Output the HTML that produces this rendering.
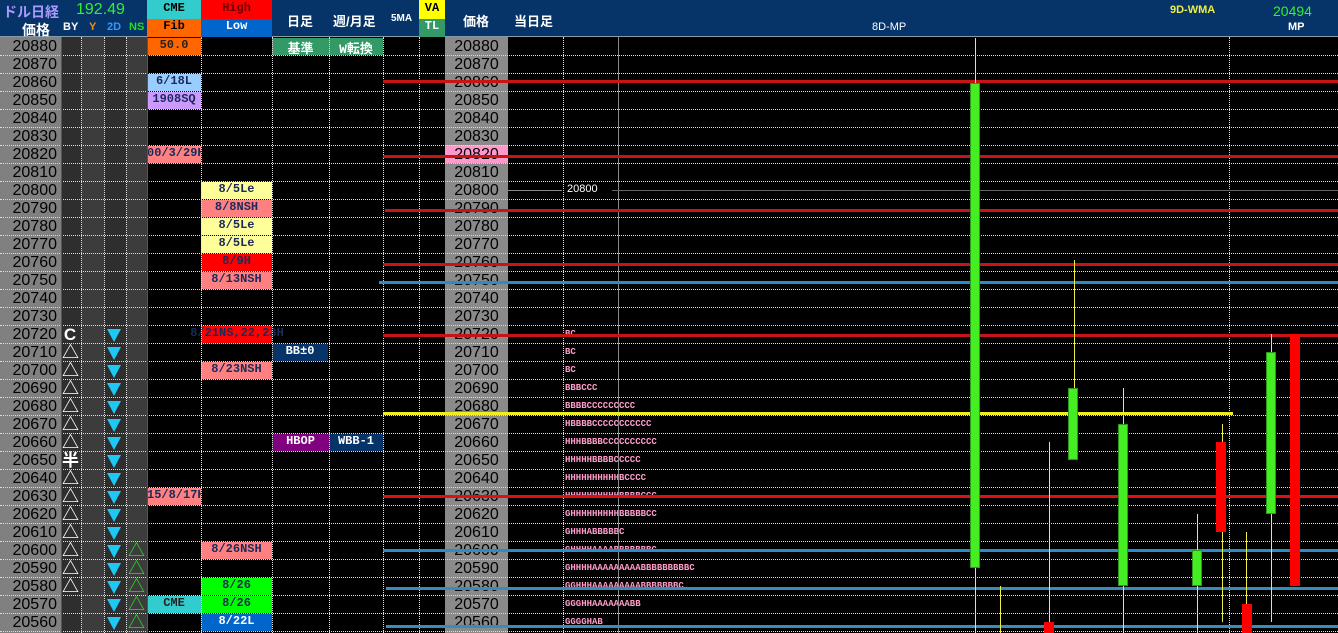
<!DOCTYPE html>
<html><head><meta charset="utf-8"><style>
*{margin:0;padding:0;box-sizing:border-box}
body{width:1338px;height:633px;background:#000;position:relative;overflow:hidden;font-family:"Liberation Sans","Noto Sans CJK JP",sans-serif}
div{position:absolute}
.hd{top:0;left:0;width:1338px;height:37px;background:#063468;border-bottom:1px solid #8899aa}
.ht{font-weight:bold;font-size:13px;color:#fff;white-space:nowrap}
.col{top:37px;height:596px}
.h{left:0;width:1338px;height:0;border-top:1px dotted #ddd}
.v{top:37px;height:596px;width:0;border-left:1px dotted #ddd}
.p{left:0;width:61px;height:18px;text-align:right;padding-right:4px;font-size:16px;line-height:19px;color:#000}
.p2{left:445px;width:63px;height:18px;text-align:center;font-size:16px;line-height:19px;color:#000}
.l{height:17px;line-height:17px;text-align:center;font:bold 12px "Liberation Mono","Noto Sans CJK JP",monospace;color:#1a2a5a;white-space:nowrap;overflow:hidden}
.w{color:#fff}
.tri{left:62px;width:16px;height:18px;color:#fff;font-size:17px;font-weight:bold;line-height:19px;text-align:center}
.dn{left:107px;width:0;height:0;border-left:7px solid transparent;border-right:7px solid transparent;border-top:13px solid #1ec8f5}
.ns{left:128px;color:#2d2;font-size:17px;font-weight:bold;line-height:19px;width:16px;text-align:center;height:18px}
.t{left:565px;font:bold 9px "Liberation Mono",monospace;color:#ff9ccc;height:18px;line-height:18px;white-space:nowrap}
.hl{height:3px}
.c{width:10px}
.wk{width:1px;background:#ee4}
</style></head><body>
<div class="hd"></div>
<div class="ht" style="left:3px;top:2px;color:#aa99ff;font-size:14px">ドル日経</div>
<div class="ht" style="left:22px;top:20px;font-size:14px">価格</div>
<div class="ht" style="left:76px;top:1px;color:#33ee33;font-size:16px;font-weight:normal">192.49</div>
<div class="ht" style="left:63px;top:21px;font-size:11px">BY</div>
<div class="ht" style="left:89px;top:21px;font-size:11px;color:#f80">Y</div>
<div class="ht" style="left:107px;top:21px;font-size:11px;color:#39f">2D</div>
<div class="ht" style="left:129px;top:21px;font-size:11px;color:#2d2">NS</div>
<div style="left:147px;top:0;width:54px;height:19px;background:#33cccc"></div>
<div style="left:147px;top:19px;width:54px;height:18px;background:#ff6600"></div>
<div class="l" style="left:147px;top:1px;width:54px;color:#000">CME</div>
<div class="l" style="left:147px;top:19px;width:54px;color:#000">Fib</div>
<div style="left:201px;top:0;width:71px;height:19px;background:#ff0000"></div>
<div style="left:201px;top:19px;width:71px;height:18px;background:#0066cc"></div>
<div class="l" style="left:201px;top:1px;width:71px;color:#600">High</div>
<div class="l w" style="left:201px;top:19px;width:71px">Low</div>
<div class="ht" style="left:287px;top:11px">日足</div>
<div class="ht" style="left:333px;top:11px">週/月足</div>
<div class="ht" style="left:391px;top:13px;font-size:10px">5MA</div>
<div style="left:419px;top:0;width:26px;height:19px;background:#ffff00"></div>
<div style="left:419px;top:19px;width:26px;height:18px;background:#339966"></div>
<div class="l" style="left:419px;top:1px;width:26px;color:#000">VA</div>
<div class="l w" style="left:419px;top:19px;width:26px">TL</div>
<div class="ht" style="left:463px;top:11px">価格</div>
<div class="ht" style="left:514px;top:11px">当日足</div>
<div class="ht" style="left:872px;top:21px;font-size:11px;font-weight:normal">8D-MP</div>
<div class="ht" style="left:1170px;top:4px;font-size:11px;color:#ee4">9D-WMA</div>
<div class="ht" style="left:1273px;top:3px;font-size:14px;color:#3e3;font-weight:normal">20494</div>
<div class="ht" style="left:1288px;top:21px;font-size:11px">MP</div>

<div class="col" style="left:0;width:61px;background:#808080"></div>
<div class="col" style="left:61px;width:20px;background:#2e2e2e"></div>
<div class="col" style="left:81px;width:23px;background:#3c3c3c"></div>
<div class="col" style="left:104px;width:22px;background:#2e2e2e"></div>
<div class="col" style="left:126px;width:21px;background:#3c3c3c"></div>
<div class="col" style="left:445px;width:63px;background:#8a8a8a"></div>
<div style="left:445px;top:145px;width:63px;height:18px;background:#ff99cc"></div>

<div class="l" style="left:147px;top:38px;width:54px;background:#ff6600;color:#222">50.0</div>
<div class="l w" style="left:272px;top:38px;width:57px;background:#339966;font-size:13px">基準</div>
<div class="l w" style="left:329px;top:38px;width:54px;background:#339966;font-size:13px">W転換</div>
<div class="l" style="left:147px;top:74px;width:54px;background:#99ccff">6/18L</div>
<div class="l" style="left:147px;top:92px;width:54px;background:#cc99ff">1908SQ</div>
<div class="l" style="left:147px;top:146px;width:54px;background:#ff8080;text-align:right">00/3/29H</div>
<div class="l" style="left:201px;top:182px;width:71px;background:#ffff99">8/5Le</div>
<div class="l" style="left:201px;top:200px;width:71px;background:#ff8080">8/8NSH</div>
<div class="l" style="left:201px;top:236px;width:71px;background:#ffff99">8/5Le</div>
<div class="l" style="left:201px;top:218px;width:71px;background:#ffff99">8/5Le</div>
<div class="l" style="left:201px;top:254px;width:71px;background:#ff0000">8/9H</div>
<div class="l" style="left:201px;top:272px;width:71px;background:#ff8080">8/13NSH</div>
<div style="left:201px;top:326px;width:71px;height:17px;background:#ff0000"></div>
<div class="l" style="left:190px;top:326px;width:94px;overflow:visible">8/21NS,22,23H</div>
<div class="l w" style="left:272px;top:344px;width:56px;background:#063468">BB±0</div>
<div class="l" style="left:201px;top:362px;width:71px;background:#ff8080">8/23NSH</div>
<div class="l w" style="left:272px;top:434px;width:57px;background:#800080">HBOP</div>
<div class="l w" style="left:329px;top:434px;width:54px;background:#063468">WBB-1</div>
<div class="l" style="left:147px;top:488px;width:54px;background:#ff8080;text-align:right">15/8/17H</div>
<div class="l" style="left:201px;top:542px;width:71px;background:#ff8080">8/26NSH</div>
<div class="l" style="left:201px;top:578px;width:71px;background:#00ff00">8/26</div>
<div class="l" style="left:201px;top:596px;width:71px;background:#00ff00">8/26</div>
<div class="l" style="left:147px;top:596px;width:54px;background:#33cccc;color:#222">CME</div>
<div class="l w" style="left:201px;top:614px;width:71px;background:#0066cc">8/22L</div>

<div class="p" style="top:37px">20880</div><div class="p" style="top:55px">20870</div><div class="p" style="top:73px">20860</div><div class="p" style="top:91px">20850</div><div class="p" style="top:109px">20840</div><div class="p" style="top:127px">20830</div><div class="p" style="top:145px">20820</div><div class="p" style="top:163px">20810</div><div class="p" style="top:181px">20800</div><div class="p" style="top:199px">20790</div><div class="p" style="top:217px">20780</div><div class="p" style="top:235px">20770</div><div class="p" style="top:253px">20760</div><div class="p" style="top:271px">20750</div><div class="p" style="top:289px">20740</div><div class="p" style="top:307px">20730</div><div class="p" style="top:325px">20720</div><div class="p" style="top:343px">20710</div><div class="p" style="top:361px">20700</div><div class="p" style="top:379px">20690</div><div class="p" style="top:397px">20680</div><div class="p" style="top:415px">20670</div><div class="p" style="top:433px">20660</div><div class="p" style="top:451px">20650</div><div class="p" style="top:469px">20640</div><div class="p" style="top:487px">20630</div><div class="p" style="top:505px">20620</div><div class="p" style="top:523px">20610</div><div class="p" style="top:541px">20600</div><div class="p" style="top:559px">20590</div><div class="p" style="top:577px">20580</div><div class="p" style="top:595px">20570</div><div class="p" style="top:613px">20560</div>
<div class="p2" style="top:37px">20880</div><div class="p2" style="top:55px">20870</div><div class="p2" style="top:73px">20860</div><div class="p2" style="top:91px">20850</div><div class="p2" style="top:109px">20840</div><div class="p2" style="top:127px">20830</div><div class="p2" style="top:145px">20820</div><div class="p2" style="top:163px">20810</div><div class="p2" style="top:181px">20800</div><div class="p2" style="top:199px">20790</div><div class="p2" style="top:217px">20780</div><div class="p2" style="top:235px">20770</div><div class="p2" style="top:253px">20760</div><div class="p2" style="top:271px">20750</div><div class="p2" style="top:289px">20740</div><div class="p2" style="top:307px">20730</div><div class="p2" style="top:325px">20720</div><div class="p2" style="top:343px">20710</div><div class="p2" style="top:361px">20700</div><div class="p2" style="top:379px">20690</div><div class="p2" style="top:397px">20680</div><div class="p2" style="top:415px">20670</div><div class="p2" style="top:433px">20660</div><div class="p2" style="top:451px">20650</div><div class="p2" style="top:469px">20640</div><div class="p2" style="top:487px">20630</div><div class="p2" style="top:505px">20620</div><div class="p2" style="top:523px">20610</div><div class="p2" style="top:541px">20600</div><div class="p2" style="top:559px">20590</div><div class="p2" style="top:577px">20580</div><div class="p2" style="top:595px">20570</div><div class="p2" style="top:613px">20560</div>

<div class="tri" style="top:325px">C</div>
<div class="tri" style="top:343px">△</div><div class="tri" style="top:361px">△</div><div class="tri" style="top:379px">△</div><div class="tri" style="top:397px">△</div><div class="tri" style="top:415px">△</div><div class="tri" style="top:433px">△</div>
<div class="tri" style="top:451px">半</div>
<div class="tri" style="top:469px">△</div><div class="tri" style="top:487px">△</div><div class="tri" style="top:505px">△</div><div class="tri" style="top:523px">△</div><div class="tri" style="top:541px">△</div><div class="tri" style="top:559px">△</div><div class="tri" style="top:577px">△</div>
<div class="dn" style="top:329px"></div><div class="dn" style="top:347px"></div><div class="dn" style="top:365px"></div><div class="dn" style="top:383px"></div><div class="dn" style="top:401px"></div><div class="dn" style="top:419px"></div><div class="dn" style="top:437px"></div><div class="dn" style="top:455px"></div><div class="dn" style="top:473px"></div><div class="dn" style="top:491px"></div><div class="dn" style="top:509px"></div><div class="dn" style="top:527px"></div><div class="dn" style="top:545px"></div><div class="dn" style="top:563px"></div><div class="dn" style="top:581px"></div><div class="dn" style="top:599px"></div><div class="dn" style="top:617px"></div>
<div class="ns" style="top:541px">△</div><div class="ns" style="top:559px">△</div><div class="ns" style="top:577px">△</div><div class="ns" style="top:595px">△</div><div class="ns" style="top:613px">△</div>

<div class="t" style="top:325px">BC</div>
<div class="t" style="top:343px">BC</div>
<div class="t" style="top:361px">BC</div>
<div class="t" style="top:379px">BBBCCC</div>
<div class="t" style="top:397px">BBBBCCCCCCCCC</div>
<div class="t" style="top:415px">HBBBBCCCCCCCCCCC</div>
<div class="t" style="top:433px">HHHBBBBCCCCCCCCCC</div>
<div class="t" style="top:451px">HHHHHBBBBCCCCC</div>
<div class="t" style="top:469px">HHHHHHHHHHBCCCC</div>
<div class="t" style="top:487px">HHHHHHHHHHBBBBCCC</div>
<div class="t" style="top:505px">GHHHHHHHHHBBBBBCC</div>
<div class="t" style="top:523px">GHHHABBBBBC</div>
<div class="t" style="top:541px">GHHHHAAAABBBBBBBC</div>
<div class="t" style="top:559px">GHHHHAAAAAAAAABBBBBBBBBC</div>
<div class="t" style="top:577px">GGHHHAAAAAAAAABBBBBBBC</div>
<div class="t" style="top:595px">GGGHHAAAAAAABB</div>
<div class="t" style="top:613px">GGGGHAB</div>

<div class="h" style="top:55px"></div><div class="h" style="top:73px"></div><div class="h" style="top:91px"></div><div class="h" style="top:109px"></div><div class="h" style="top:127px"></div><div class="h" style="top:145px"></div><div class="h" style="top:163px"></div><div class="h" style="top:181px"></div><div class="h" style="top:199px"></div><div class="h" style="top:217px"></div><div class="h" style="top:235px"></div><div class="h" style="top:253px"></div><div class="h" style="top:271px"></div><div class="h" style="top:289px"></div><div class="h" style="top:307px"></div><div class="h" style="top:325px"></div><div class="h" style="top:343px"></div><div class="h" style="top:361px"></div><div class="h" style="top:379px"></div><div class="h" style="top:397px"></div><div class="h" style="top:415px"></div><div class="h" style="top:433px"></div><div class="h" style="top:451px"></div><div class="h" style="top:469px"></div><div class="h" style="top:487px"></div><div class="h" style="top:505px"></div><div class="h" style="top:523px"></div><div class="h" style="top:541px"></div><div class="h" style="top:559px"></div><div class="h" style="top:577px"></div><div class="h" style="top:595px"></div><div class="h" style="top:613px"></div><div class="h" style="top:631px"></div>
<div class="v" style="left:81px"></div><div class="v" style="left:104px"></div><div class="v" style="left:126px"></div><div class="v" style="left:201px"></div><div class="v" style="left:272px"></div><div class="v" style="left:329px"></div><div class="v" style="left:383px"></div><div class="v" style="left:419px"></div><div class="v" style="left:563px"></div><div class="v" style="left:1229px"></div>
<div style="left:618px;top:37px;width:1px;height:596px;background:#888"></div>
<div style="left:147px;top:37px;width:1px;height:596px;background:#555"></div>
<div style="left:61px;top:37px;width:1px;height:596px;background:#555"></div>

<div style="left:508px;top:190px;width:54px;height:1px;background:#888"></div>
<div style="left:567px;top:183px;color:#fff;font-size:11px">20800</div>
<div style="left:612px;top:190px;width:726px;height:1px;background:#666"></div>

<div class="hl" style="left:383px;width:955px;top:80px;background:#c81414"></div>
<div class="hl" style="left:383px;width:955px;top:155px;background:#c81414"></div>
<div class="hl" style="left:385px;width:953px;top:209px;background:#c81414"></div>
<div class="hl" style="left:383px;width:955px;top:263px;background:#c81414"></div>
<div class="hl" style="left:383px;width:955px;top:334px;background:#c81414"></div>
<div class="hl" style="left:383px;width:955px;top:495px;background:#e01010"></div>
<div class="hl" style="left:379px;width:959px;top:281px;background:#2a8cc8"></div>
<div class="hl" style="left:383px;width:955px;top:549px;background:#2a8cc8"></div>
<div class="hl" style="left:386px;width:952px;top:587px;background:#3a8cb8"></div>
<div class="hl" style="left:386px;width:952px;top:625px;background:#3a8cb8"></div>
<div class="hl" style="left:383px;width:850px;top:412px;background:#eeee22"></div>

<div class="wk" style="left:975px;top:38px;height:595px"></div>
<div class="c" style="left:970px;top:83px;height:485px;background:#44ee22;border:1px solid #2a9a18"></div>
<div class="wk" style="left:1000px;top:586px;height:47px"></div>
<div class="wk" style="left:1049px;top:442px;height:191px"></div>
<div class="c" style="left:1044px;top:622px;height:11px;background:#f00"></div>
<div class="wk" style="left:1074px;top:260px;height:130px"></div>
<div class="c" style="left:1068px;top:388px;height:72px;background:#44ee22;border:1px solid #2a9a18"></div>
<div class="wk" style="left:1123px;top:388px;height:245px"></div>
<div class="c" style="left:1118px;top:424px;height:162px;background:#44ee22;border:1px solid #2a9a18"></div>
<div class="wk" style="left:1197px;top:514px;height:119px"></div>
<div class="c" style="left:1192px;top:550px;height:36px;background:#44ee22;border:1px solid #2a9a18"></div>
<div class="wk" style="left:1222px;top:424px;height:198px"></div>
<div class="c" style="left:1216px;top:442px;height:90px;background:#f00"></div>
<div class="wk" style="left:1246px;top:532px;height:101px"></div>
<div class="c" style="left:1242px;top:604px;height:29px;background:#f00"></div>
<div class="wk" style="left:1271px;top:334px;height:288px"></div>
<div class="c" style="left:1266px;top:352px;height:162px;background:#44ee22;border:1px solid #2a9a18"></div>
<div class="c" style="left:1290px;top:334px;height:252px;background:#f00"></div>
</body></html>
